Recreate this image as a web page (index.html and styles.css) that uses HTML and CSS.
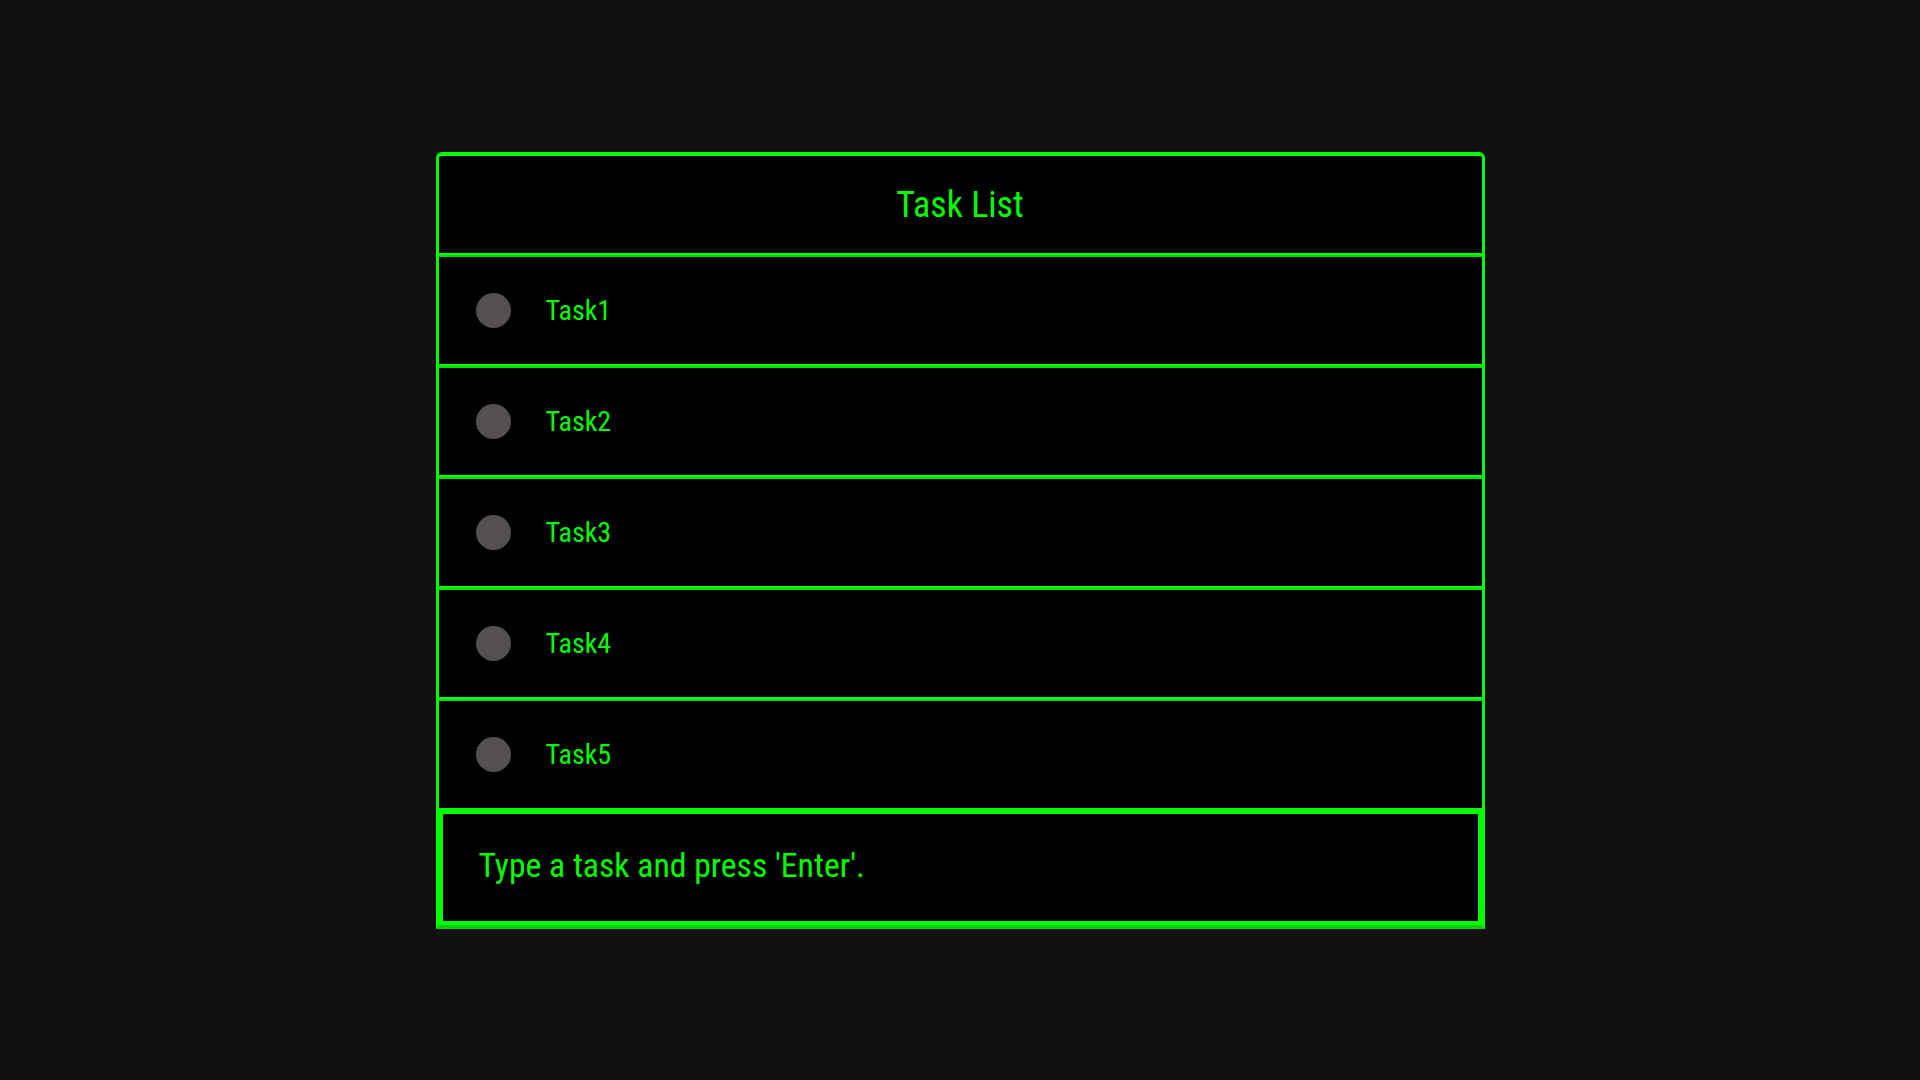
FILE: index.html
```html
<!DOCTYPE html>
<html lang="en">
<head>
<meta charset="utf-8">
<title>Task List</title>
<link rel="stylesheet" href="styles.css">
</head>
<body>
<div class="app">
  <div class="header">Task List</div>
  <ul class="tasks">
    <li class="task"><span class="dot"></span><span class="label">Task1</span></li>
    <li class="task"><span class="dot"></span><span class="label">Task2</span></li>
    <li class="task"><span class="dot"></span><span class="label">Task3</span></li>
    <li class="task"><span class="dot"></span><span class="label">Task4</span></li>
    <li class="task"><span class="dot"></span><span class="label">Task5</span></li>
  </ul>
  <input class="entry" type="text" placeholder="Type a task and press 'Enter'.">
</div>
</body>
</html>
```

FILE: styles.css
```css
html, body {
  margin: 0;
  padding: 0;
  background: #111111;
}

body {
  font-family: "Roboto Condensed", "Liberation Sans Narrow", Roboto, sans-serif;
  color: #00ff00;
}

.app {
  box-sizing: border-box;
  width: 1049px;
  margin: 152px auto 0;
  background: #000;
  border: 3px solid #00ff00;
  border-top-width: 4px;
  border-bottom: 4px solid #00d000;
  border-radius: 6px 6px 0 0;
  display: flex;
  flex-direction: column;
}

.header {
  height: 97px;
  display: flex;
  align-items: center;
  justify-content: center;
  font-size: 36px;
  border-bottom: 2px solid #00ff00;
}

.tasks {
  list-style: none;
  margin: 0;
  padding: 0;
}

.task {
  height: 107px;
  display: flex;
  align-items: center;
  gap: 35px;
  padding-left: 37px;
  border-top: 2px solid #00e000;
  border-bottom: 2px solid #00ff00;
  font-size: 28px;
}

.dot {
  width: 35px;
  height: 35px;
  border-radius: 50%;
  background: #545050;
  flex: none;
}

.entry {
  box-sizing: content-box;
  height: 102px;
  margin: 0;
  padding: 0 0 5px 36px;
  border: 4px solid #00ff00;
  background: #000;
  color: #00ff00;
  font-family: inherit;
  font-size: 33.7px;
  outline: none;
}

.entry::placeholder {
  color: #00ff00;
  opacity: 1;
}
```
